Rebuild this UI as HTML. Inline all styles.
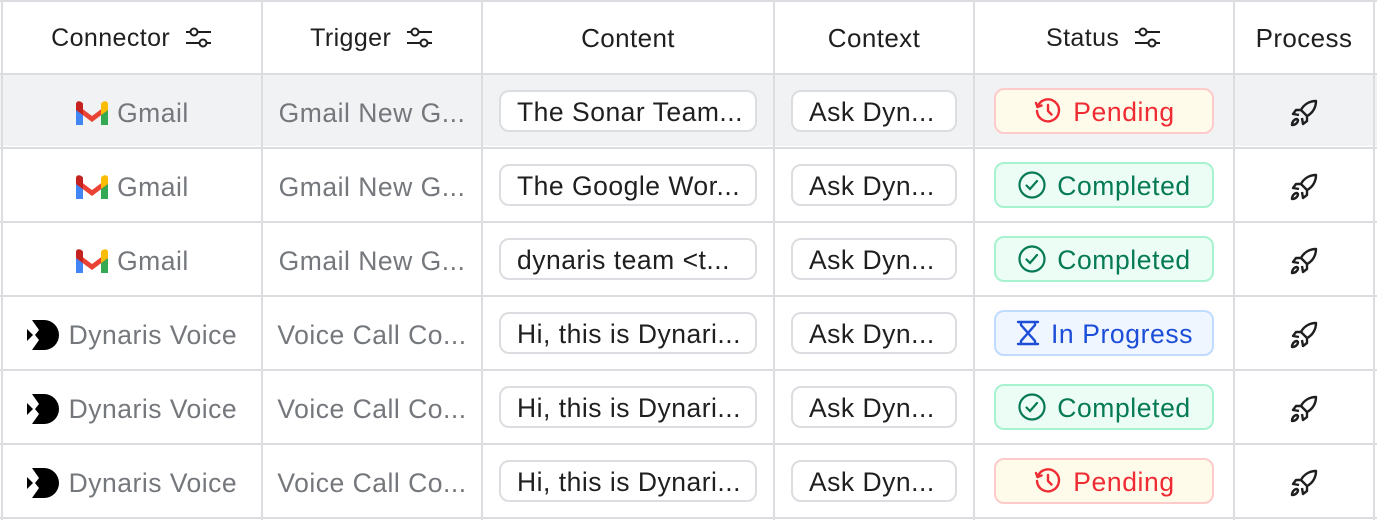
<!DOCTYPE html>
<html><head><meta charset="utf-8"><style>
*{box-sizing:border-box;margin:0;padding:0}
body{width:1377px;height:520px;background:#fff;font-family:"Liberation Sans",sans-serif;position:relative;overflow:hidden}
.vl{position:absolute;top:0;width:2px;height:520px;background:#dcdde0}
.hl{position:absolute;left:0;width:1377px;height:2px;background:#dcdde0}
.row{position:absolute;left:0;width:1377px;height:72px}
.c{position:absolute;display:flex;align-items:center;justify-content:center;height:72px;white-space:nowrap;padding-top:4px}
.h{font-size:25px;color:#1f1f1f;letter-spacing:.4px;padding-top:0}
.g{font-size:26.5px;color:#74777b;letter-spacing:.5px}
.pill{position:absolute;height:42px;border:2px solid #dcdde0;border-radius:10px;background:#fff;font-size:26.5px;letter-spacing:.5px;color:#1f1f1f;display:flex;align-items:center;padding-left:16px;padding-top:3px}
.badge{position:absolute;left:994px;width:220px;height:46px;border-radius:10px;border:2px solid;font-size:26.5px;letter-spacing:.6px;display:flex;align-items:center;justify-content:center;gap:10px;padding-top:3px}
.badge svg{margin-top:-3px}
.pend{background:#fffbeb;border-color:#fecaca;color:#ef2b33}
.comp{background:#ecfdf5;border-color:#a7f3d0;color:#067a55}
.prog{background:#eff6ff;border-color:#bfdbfe;color:#1d4ed8}
</style></head><body>
<div class="row" style="top:74px;background:#f1f2f4"></div>
<div class="hl" style="top:0"></div>
<div class="hl" style="top:73px"></div>
<div class="hl" style="top:147px"></div>
<div class="hl" style="top:221px"></div>
<div class="hl" style="top:295px"></div>
<div class="hl" style="top:369px"></div>
<div class="hl" style="top:443px"></div>
<div class="hl" style="top:517px"></div>
<div class="vl" style="left:1px"></div>
<div class="vl" style="left:261px"></div>
<div class="vl" style="left:481px"></div>
<div class="vl" style="left:773px"></div>
<div class="vl" style="left:973px"></div>
<div class="vl" style="left:1233px"></div>
<div class="vl" style="left:1373px"></div>

<div class="c h" style="left:3px;width:258px;top:2px">Connector&nbsp;&nbsp;<svg width="28" height="24" viewBox="0 0 28 24" fill="none" stroke="#1f1f1f" stroke-width="2"><circle cx="9" cy="6" r="3.5"/><line x1="1" y1="6" x2="5.5" y2="6"/><line x1="12.5" y1="6" x2="26" y2="6"/><circle cx="18" cy="17" r="3.5"/><line x1="1" y1="17" x2="14.5" y2="17"/><line x1="21.5" y1="17" x2="26" y2="17"/></svg></div>
<div class="c h" style="left:263px;width:218px;top:2px">Trigger&nbsp;&nbsp;<svg width="28" height="24" viewBox="0 0 28 24" fill="none" stroke="#1f1f1f" stroke-width="2"><circle cx="9" cy="6" r="3.5"/><line x1="1" y1="6" x2="5.5" y2="6"/><line x1="12.5" y1="6" x2="26" y2="6"/><circle cx="18" cy="17" r="3.5"/><line x1="1" y1="17" x2="14.5" y2="17"/><line x1="21.5" y1="17" x2="26" y2="17"/></svg></div>
<div class="c h" style="left:483px;width:290px;top:2px;font-size:26px">Content</div>
<div class="c h" style="left:775px;width:198px;top:2px;font-size:26px">Context</div>
<div class="c h" style="left:975px;width:258px;top:2px">Status&nbsp;&nbsp;<svg width="28" height="24" viewBox="0 0 28 24" fill="none" stroke="#1f1f1f" stroke-width="2"><circle cx="9" cy="6" r="3.5"/><line x1="1" y1="6" x2="5.5" y2="6"/><line x1="12.5" y1="6" x2="26" y2="6"/><circle cx="18" cy="17" r="3.5"/><line x1="1" y1="17" x2="14.5" y2="17"/><line x1="21.5" y1="17" x2="26" y2="17"/></svg></div>
<div class="c h" style="left:1235px;width:138px;top:2px;font-size:26px">Process</div>

<!-- Row 1 -->
<div class="c g" style="left:3px;width:258px;top:75px"><svg width="34" height="26" viewBox="0 0 34 26"><path d="M1 5v20h7V10z" fill="#4285f4"/><path d="M26 10v15h7V5z" fill="#34a853"/><path d="M1 4l16 12 16-12v6L17 22 1 10z" fill="#ea4335"/><path d="M1 4v6l7 5V3.5C5 0 1 1 1 4z" fill="#c5221f"/><path d="M26 3.5V15l7-5V4c0-3-4-4-7-.5z" fill="#fbbc04"/><path d="M26 10v5l7-5V5z" fill="#fbbc04"/></svg>&nbsp;Gmail</div>
<div class="c g" style="left:263px;width:218px;top:75px">Gmail New G...</div>
<div class="pill" style="left:499px;top:90px;width:258px">The Sonar Team...</div>
<div class="pill" style="left:791px;top:90px;width:166px">Ask Dyn...</div>
<div class="badge pend" style="top:88px"><svg width="30" height="30" viewBox="0 0 30 30" fill="none" stroke="#ef2b33" stroke-width="2.4" stroke-linecap="round" stroke-linejoin="round"><path d="M4.5 11A11 11 0 1 1 4 15"/><path d="M3 7l1.5 4 4-1.5"/><path d="M15 9v6l3.5 3.5"/></svg>Pending</div>
<div class="c" style="left:1235px;width:138px;top:75px"><svg width="30" height="30" viewBox="0 0 30 30" fill="none" stroke="#1f1f1f" stroke-width="2.4" stroke-linejoin="round"><path d="M27 3c-6 0-12 3-15 9l6 6c6-3 9-9 9-15z"/><path d="M12 12l-5 0-3 4 6 1"/><path d="M18 18l0 5-4 3-1-6"/><path d="M8 21c-3 0-5 3-5 6 3 0 6-2 6-5z"/></svg></div>

<!-- Row 2 -->
<div class="c g" style="left:3px;width:258px;top:149px"><svg width="34" height="26" viewBox="0 0 34 26"><path d="M1 5v20h7V10z" fill="#4285f4"/><path d="M26 10v15h7V5z" fill="#34a853"/><path d="M1 4l16 12 16-12v6L17 22 1 10z" fill="#ea4335"/><path d="M1 4v6l7 5V3.5C5 0 1 1 1 4z" fill="#c5221f"/><path d="M26 3.5V15l7-5V4c0-3-4-4-7-.5z" fill="#fbbc04"/></svg>&nbsp;Gmail</div>
<div class="c g" style="left:263px;width:218px;top:149px">Gmail New G...</div>
<div class="pill" style="left:499px;top:164px;width:258px">The Google Wor...</div>
<div class="pill" style="left:791px;top:164px;width:166px">Ask Dyn...</div>
<div class="badge comp" style="top:162px"><svg width="30" height="30" viewBox="0 0 30 30" fill="none" stroke="#067a55" stroke-width="2.2"><circle cx="15" cy="15" r="12.5"/><path d="M9.5 15.5l3.5 3.5 7-8" stroke-linecap="round"/></svg>Completed</div>
<div class="c" style="left:1235px;width:138px;top:149px"><svg width="30" height="30" viewBox="0 0 30 30" fill="none" stroke="#1f1f1f" stroke-width="2.4" stroke-linejoin="round"><path d="M27 3c-6 0-12 3-15 9l6 6c6-3 9-9 9-15z"/><path d="M12 12l-5 0-3 4 6 1"/><path d="M18 18l0 5-4 3-1-6"/><path d="M8 21c-3 0-5 3-5 6 3 0 6-2 6-5z"/></svg></div>

<!-- Row 3 -->
<div class="c g" style="left:3px;width:258px;top:223px"><svg width="34" height="26" viewBox="0 0 34 26"><path d="M1 5v20h7V10z" fill="#4285f4"/><path d="M26 10v15h7V5z" fill="#34a853"/><path d="M1 4l16 12 16-12v6L17 22 1 10z" fill="#ea4335"/><path d="M1 4v6l7 5V3.5C5 0 1 1 1 4z" fill="#c5221f"/><path d="M26 3.5V15l7-5V4c0-3-4-4-7-.5z" fill="#fbbc04"/></svg>&nbsp;Gmail</div>
<div class="c g" style="left:263px;width:218px;top:223px">Gmail New G...</div>
<div class="pill" style="left:499px;top:238px;width:258px">dynaris team &lt;t...</div>
<div class="pill" style="left:791px;top:238px;width:166px">Ask Dyn...</div>
<div class="badge comp" style="top:236px"><svg width="30" height="30" viewBox="0 0 30 30" fill="none" stroke="#067a55" stroke-width="2.2"><circle cx="15" cy="15" r="12.5"/><path d="M9.5 15.5l3.5 3.5 7-8" stroke-linecap="round"/></svg>Completed</div>
<div class="c" style="left:1235px;width:138px;top:223px"><svg width="30" height="30" viewBox="0 0 30 30" fill="none" stroke="#1f1f1f" stroke-width="2.4" stroke-linejoin="round"><path d="M27 3c-6 0-12 3-15 9l6 6c6-3 9-9 9-15z"/><path d="M12 12l-5 0-3 4 6 1"/><path d="M18 18l0 5-4 3-1-6"/><path d="M8 21c-3 0-5 3-5 6 3 0 6-2 6-5z"/></svg></div>

<!-- Row 4 -->
<div class="c g" style="left:3px;width:258px;top:297px"><svg width="34" height="32" viewBox="0 0 34 32"><path d="M5 1h12a15 15 0 0 1 0 30H5l7-10-4-5 4-5z" fill="#000"/><path d="M0 10l6 6-6 6z" fill="#000"/></svg>&nbsp;Dynaris Voice</div>
<div class="c g" style="left:263px;width:218px;top:297px">Voice Call Co...</div>
<div class="pill" style="left:499px;top:312px;width:258px">Hi, this is Dynari...</div>
<div class="pill" style="left:791px;top:312px;width:166px">Ask Dyn...</div>
<div class="badge prog" style="top:310px"><svg width="26" height="28" viewBox="0 0 26 28" fill="none" stroke="#1d4ed8" stroke-width="2.4" stroke-linecap="round"><path d="M3 3h20M3 25h20M6 3v3l7 8-7 8v3M20 3v3l-7 8 7 8v3"/></svg>In Progress</div>
<div class="c" style="left:1235px;width:138px;top:297px"><svg width="30" height="30" viewBox="0 0 30 30" fill="none" stroke="#1f1f1f" stroke-width="2.4" stroke-linejoin="round"><path d="M27 3c-6 0-12 3-15 9l6 6c6-3 9-9 9-15z"/><path d="M12 12l-5 0-3 4 6 1"/><path d="M18 18l0 5-4 3-1-6"/><path d="M8 21c-3 0-5 3-5 6 3 0 6-2 6-5z"/></svg></div>

<!-- Row 5 -->
<div class="c g" style="left:3px;width:258px;top:371px"><svg width="34" height="32" viewBox="0 0 34 32"><path d="M5 1h12a15 15 0 0 1 0 30H5l7-10-4-5 4-5z" fill="#000"/><path d="M0 10l6 6-6 6z" fill="#000"/></svg>&nbsp;Dynaris Voice</div>
<div class="c g" style="left:263px;width:218px;top:371px">Voice Call Co...</div>
<div class="pill" style="left:499px;top:386px;width:258px">Hi, this is Dynari...</div>
<div class="pill" style="left:791px;top:386px;width:166px">Ask Dyn...</div>
<div class="badge comp" style="top:384px"><svg width="30" height="30" viewBox="0 0 30 30" fill="none" stroke="#067a55" stroke-width="2.2"><circle cx="15" cy="15" r="12.5"/><path d="M9.5 15.5l3.5 3.5 7-8" stroke-linecap="round"/></svg>Completed</div>
<div class="c" style="left:1235px;width:138px;top:371px"><svg width="30" height="30" viewBox="0 0 30 30" fill="none" stroke="#1f1f1f" stroke-width="2.4" stroke-linejoin="round"><path d="M27 3c-6 0-12 3-15 9l6 6c6-3 9-9 9-15z"/><path d="M12 12l-5 0-3 4 6 1"/><path d="M18 18l0 5-4 3-1-6"/><path d="M8 21c-3 0-5 3-5 6 3 0 6-2 6-5z"/></svg></div>

<!-- Row 6 -->
<div class="c g" style="left:3px;width:258px;top:445px"><svg width="34" height="32" viewBox="0 0 34 32"><path d="M5 1h12a15 15 0 0 1 0 30H5l7-10-4-5 4-5z" fill="#000"/><path d="M0 10l6 6-6 6z" fill="#000"/></svg>&nbsp;Dynaris Voice</div>
<div class="c g" style="left:263px;width:218px;top:445px">Voice Call Co...</div>
<div class="pill" style="left:499px;top:460px;width:258px">Hi, this is Dynari...</div>
<div class="pill" style="left:791px;top:460px;width:166px">Ask Dyn...</div>
<div class="badge pend" style="top:458px"><svg width="30" height="30" viewBox="0 0 30 30" fill="none" stroke="#ef2b33" stroke-width="2.4" stroke-linecap="round" stroke-linejoin="round"><path d="M4.5 11A11 11 0 1 1 4 15"/><path d="M3 7l1.5 4 4-1.5"/><path d="M15 9v6l3.5 3.5"/></svg>Pending</div>
<div class="c" style="left:1235px;width:138px;top:445px"><svg width="30" height="30" viewBox="0 0 30 30" fill="none" stroke="#1f1f1f" stroke-width="2.4" stroke-linejoin="round"><path d="M27 3c-6 0-12 3-15 9l6 6c6-3 9-9 9-15z"/><path d="M12 12l-5 0-3 4 6 1"/><path d="M18 18l0 5-4 3-1-6"/><path d="M8 21c-3 0-5 3-5 6 3 0 6-2 6-5z"/></svg></div>
</body></html>
